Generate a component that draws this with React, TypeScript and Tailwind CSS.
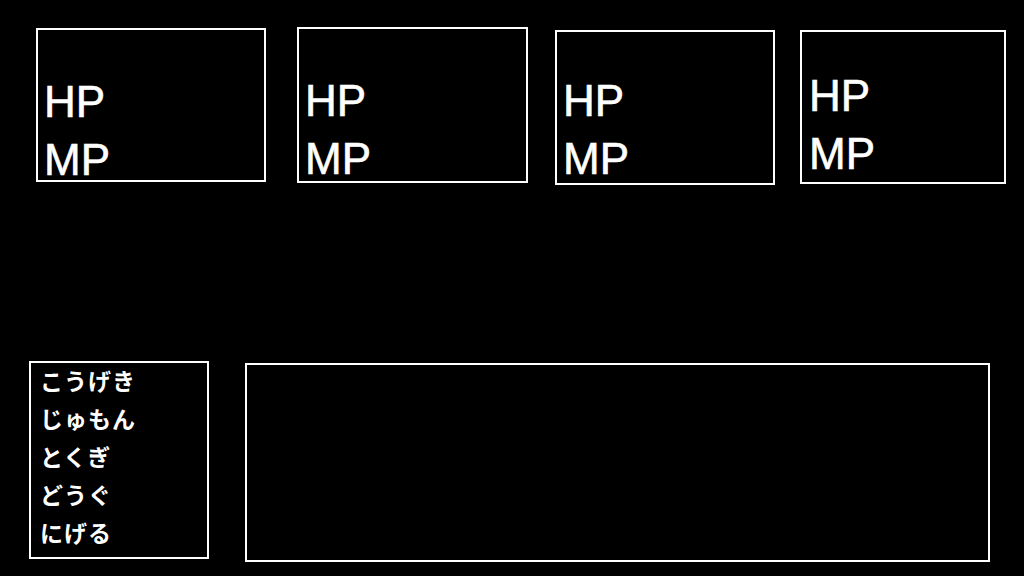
const statusBoxes = [
  { id: 1, box: 'ml-[36px] mt-[28px] w-[230px] h-[154px]', pad: 'pt-[43px] pl-[6px]' },
  { id: 2, box: 'ml-[31px] mt-[27px] w-[231px] h-[156px]', pad: 'pt-[43px] pl-[6px]' },
  { id: 3, box: 'ml-[27px] mt-[30px] w-[220px] h-[155px]', pad: 'pt-[40px] pl-[6px]' },
  { id: 4, box: 'ml-[25px] mt-[30px] w-[206px] h-[154px]', pad: 'pt-[35px] pl-[7px]' },
]

const commands = ['こうげき', 'じゅもん', 'とくぎ', 'どうぐ', 'にげる']

export default function App() {
  return (
    <div className="w-[1024px] h-[576px] bg-black text-white overflow-hidden flex flex-col">
      {/* ── Party status ─────────────────────────────── */}
      <div className="flex items-start">
        {statusBoxes.map((s) => (
          <div key={s.id} className={`${s.box} shrink-0 border-2 border-white`}>
            <div
              className={`${s.pad} text-[44px] leading-[58px] [-webkit-text-stroke:0.6px_white]`}
              style={{ fontFamily: '"Liberation Sans", Arial, sans-serif' }}
            >
              <p>HP</p>
              <p>MP</p>
            </div>
          </div>
        ))}
      </div>

      {/* ── Command + message windows ────────────────── */}
      <div className="flex items-start mt-auto mb-[14px]">
        <div className="ml-[29px] w-[180px] h-[198px] shrink-0 border-2 border-white">
          <ul
            className="pl-[9px] -mt-[2px] text-[23px] leading-[38px] font-bold tracking-[1px]"
            style={{ fontFamily: '"Noto Sans CJK JP", "Noto Sans", sans-serif' }}
          >
            {commands.map((c) => (
              <li key={c}>{c}</li>
            ))}
          </ul>
        </div>
        <div className="ml-[36px] mt-[2px] w-[745px] h-[199px] shrink-0 border-2 border-white" />
      </div>
    </div>
  )
}
